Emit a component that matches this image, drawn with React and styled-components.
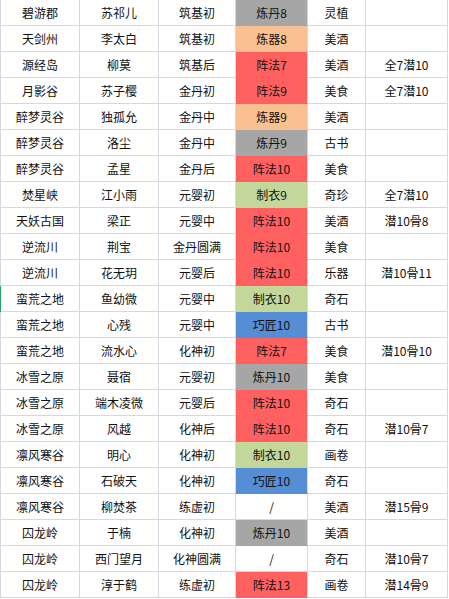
import styled, { createGlobalStyle } from 'styled-components';

const GlobalStyle = createGlobalStyle`
  html, body {
    margin: 0;
    padding: 0;
    background: #ffffff;
  }
  body {
    font-family: "Noto Sans CJK SC", "Noto Sans", sans-serif;
  }
`;

const FILLS = {
  gray: '#A6A6A6',
  peach: '#FAC08F',
  red: '#FF6161',
  green: '#C4D79B',
  blue: '#558ED5',
};

const GRID = '#D4D8E2';

const Sheet = styled.div`
  width: 448px;
  display: flex;
  flex-direction: column;
`;

const Row = styled.div`
  display: grid;
  grid-template-columns: 79px 79px 77px 72px 58px 82px;
  border-left: 1px solid ${props => (props.active ? '#21A366' : GRID)};
`;

const Cell = styled.div`
  box-sizing: border-box;
  height: 26px;
  display: flex;
  align-items: center;
  justify-content: center;
  font-size: 12px;
  color: #111;
  white-space: nowrap;
  background: ${props => (props.fill ? FILLS[props.fill] : '#ffffff')};
  border-right: 1px solid ${GRID};
  border-bottom: 1px solid ${props => (props.fill ? FILLS[props.fill] : GRID)};
  padding-bottom: 1px;
`;

const rows = [
  ['碧游郡', '苏祁儿', '筑基初', '炼丹8', 'gray', '灵植', ''],
  ['天剑州', '李太白', '筑基初', '炼器8', 'peach', '美酒', ''],
  ['源经岛', '柳莫', '筑基后', '阵法7', 'red', '美酒', '全7潜10'],
  ['月影谷', '苏子樱', '金丹初', '阵法9', 'red', '美食', '全7潜10'],
  ['醉梦灵谷', '独孤允', '金丹中', '炼器9', 'peach', '美酒', ''],
  ['醉梦灵谷', '洛尘', '金丹中', '炼丹9', 'gray', '古书', ''],
  ['醉梦灵谷', '孟星', '金丹后', '阵法10', 'red', '美食', ''],
  ['焚星峡', '江小雨', '元婴初', '制衣9', 'green', '奇珍', '全7潜10'],
  ['天妖古国', '梁正', '元婴中', '阵法10', 'red', '美酒', '潜10骨8'],
  ['逆流川', '荆宝', '金丹圆满', '阵法10', 'red', '美食', ''],
  ['逆流川', '花无玥', '元婴后', '阵法10', 'red', '乐器', '潜10骨11'],
  ['蛮荒之地', '鱼幼微', '元婴中', '制衣10', 'green', '奇石', ''],
  ['蛮荒之地', '心残', '元婴中', '巧匠10', 'blue', '古书', ''],
  ['蛮荒之地', '流水心', '化神初', '阵法7', 'red', '美食', '潜10骨10'],
  ['冰雪之原', '聂宿', '元婴初', '炼丹10', 'gray', '美食', ''],
  ['冰雪之原', '端木凌微', '元婴后', '阵法10', 'red', '奇石', ''],
  ['冰雪之原', '风越', '化神后', '阵法10', 'red', '奇石', '潜10骨7'],
  ['凛风寒谷', '明心', '化神初', '制衣10', 'green', '画卷', ''],
  ['凛风寒谷', '石破天', '化神初', '巧匠10', 'blue', '奇石', ''],
  ['凛风寒谷', '柳焚茶', '练虚初', '/', null, '美酒', '潜15骨9'],
  ['囚龙岭', '于楠', '化神初', '炼丹10', 'gray', '美酒', ''],
  ['囚龙岭', '西门望月', '化神圆满', '/', null, '奇石', '潜10骨7'],
  ['囚龙岭', '淳于鹤', '练虚初', '阵法13', 'red', '画卷', '潜14骨9'],
];

export default function App() {
  return (
    <>
      <GlobalStyle />
      <Sheet>
        {rows.map(([place, name, realm, skill, fill, hobby, note], i) => (
          <Row key={i} active={i === 11}>
            <Cell>{place}</Cell>
            <Cell>{name}</Cell>
            <Cell>{realm}</Cell>
            <Cell fill={fill}>{skill}</Cell>
            <Cell>{hobby}</Cell>
            <Cell>{note}</Cell>
          </Row>
        ))}
      </Sheet>
    </>
  );
}
